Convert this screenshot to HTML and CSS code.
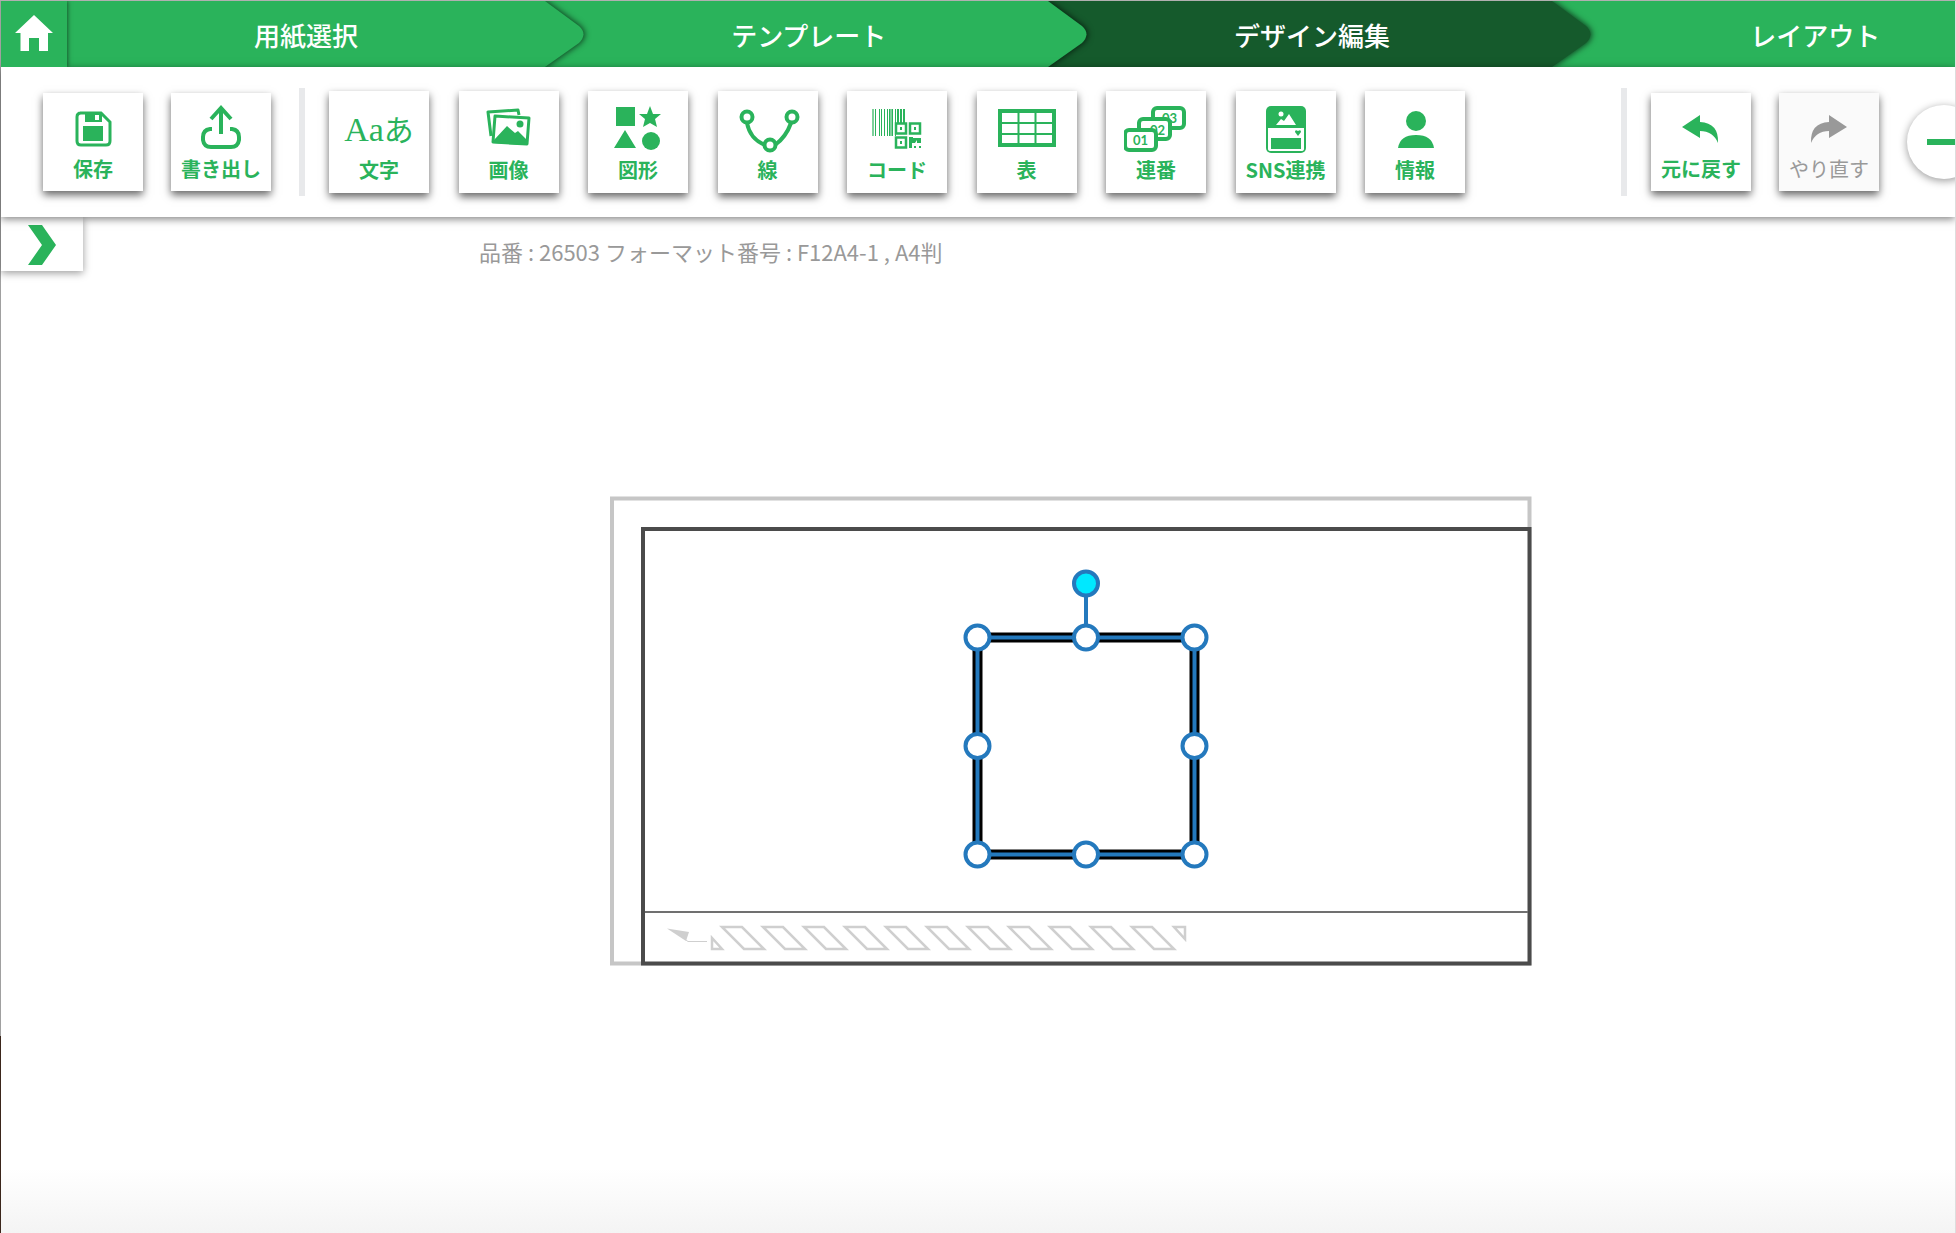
FILE: index.html
```html
<!DOCTYPE html>
<html lang="ja">
<head>
<meta charset="utf-8">
<title>デザイン編集</title>
<link rel="stylesheet" href="styles.css">
</head>
<body>
<div class="app">
  <header class="header">
    <a class="home" href="#" aria-label="ホーム">
      <svg width="38" height="36" viewBox="0 0 38 36"><path fill="#fff" d="M19 0 38 18H33V36H24V23H14V36H5.500V18H0Z"/></svg>
    </a>
    <nav class="steps">
      <a class="step" href="#">用紙選択<svg class="tip" width="56" height="66" viewBox="0 0 56 66"><path d="M-20 0H0L34 25Q43 33 34 42L0 66H-20Z"/></svg></a>
      <a class="step" href="#">テンプレート<svg class="tip" width="56" height="66" viewBox="0 0 56 66"><path d="M-20 0H0L34 25Q43 33 34 42L0 66H-20Z"/></svg></a>
      <a class="step current" href="#" aria-current="step">デザイン編集<svg class="tip" width="56" height="66" viewBox="0 0 56 66"><path d="M-20 0H0L34 25Q43 33 34 42L0 66H-20Z"/></svg></a>
      <a class="step" href="#">レイアウト</a>
    </nav>
  </header>

  <div class="toolbar">
    <div class="file-tools">
      <button class="tool short" type="button">
        <svg width="56" height="52" viewBox="0 0 56 52"><path d="M15 10H36L45 19V38Q45 42 41 42H16Q12 42 12 38V14Q12 10 16 10Z" fill="none" stroke="currentColor" stroke-width="3"/><path fill="currentColor" d="M20 10H37V19H20ZM18 23H38V38H18Z"/><path fill="#fff" d="M30 12H34V17H30Z"/></svg>
        保存
      </button>
      <button class="tool short" type="button">
        <svg width="56" height="52" viewBox="0 0 56 52" fill="none" stroke="currentColor" stroke-width="4"><path d="M28 31V5M18 16 28 5 38 16"/><path d="M19 26H17Q10 27 10 34V37Q11 44 18 44H38Q45 44 46 37V34Q46 27 39 26H37"/></svg>
        書き出し
      </button>
    </div>
    <span class="divider"></span>
    <div class="insert-tools">
      <button class="tool" type="button">
        <span class="type-icon"><span class="latin">Aa</span>あ</span>
        文字
      </button>
      <button class="tool" type="button">
        <svg width="56" height="52" viewBox="0 0 56 52"><path d="M10 33 7 9 37 7 38 12" fill="none" stroke="currentColor" stroke-width="3" stroke-linejoin="round"/><path d="M14 13 48 15 46 41 12 39Z" fill="#fff" stroke="currentColor" stroke-width="3" stroke-linejoin="round"/><path fill="currentColor" d="M13 37 26 23 34 30 37 28 47 38 46 42 12 40Z"/><circle cx="39" cy="21" r="3.500" fill="currentColor"/></svg>
        画像
      </button>
      <button class="tool" type="button">
        <svg width="56" height="52" viewBox="0 0 56 52" fill="currentColor"><path d="M6 4H25V23H6ZM15 27 26 45H4ZM40 3 43 11 51 11 45 16 47 24 40 20 33 24 35 16 29 11H37Z"/><circle cx="41" cy="38" r="9"/></svg>
        図形
      </button>
      <button class="tool" type="button">
        <svg width="64" height="52" viewBox="0 0 64 52" fill="none" stroke="currentColor" stroke-width="4"><circle cx="11" cy="14" r="5.500"/><circle cx="56" cy="14" r="5.500"/><circle cx="34" cy="42" r="5.500"/><path d="M11 20Q14 36 29 42M55 20Q50 34 39 42"/></svg>
        線
      </button>
      <button class="tool" type="button">
        <svg width="56" height="52" viewBox="2 0 56 52"><path stroke="currentColor" stroke-width="1" d="M8.500 6V33M12.500 6V33M14.500 6V33M17.500 6V33M20.500 6V33M22.500 6V33M25.500 6V33M28.500 6V33"/><path stroke="currentColor" stroke-width="2" opacity=".6" d="M6 6V33M24 6V33"/><path stroke="currentColor" stroke-width="2" d="M31 6V22M34 6V20M37 6V20"/><g fill="#fff" stroke="currentColor" stroke-width="2.500"><path d="M29 20.500H39V30.500H29ZM43 20.500H53V30.500H43ZM29 34.500H39V44.500H29Z"/></g><path fill="currentColor" d="M33 24H35V27H33ZM47 24H49V27H47ZM33 38H35V41H33ZM42 34H46V35H54V40H50V37L48 40H45V45H42ZM47 43H49V45H47ZM52 43H54V45H52Z"/></svg>
        コード
      </button>
      <button class="tool" type="button">
        <svg width="58" height="52" viewBox="0 0 58 52" fill="none" stroke="currentColor"><path stroke-width="4" d="M2 8H56V42H2Z"/><path stroke-width="2" d="M2 20H56M2 31H56M20.500 8V42M37.500 8V42"/></svg>
        表
      </button>
      <button class="tool" type="button">
        <svg width="64" height="52" viewBox="1 0 64 52"><rect x="30" y="5" width="31" height="20" rx="4" fill="#fff" stroke="currentColor" stroke-width="4"/><text class="num" x="39" y="20">03</text><rect x="16" y="16" width="31" height="20" rx="4" fill="#fff" stroke="currentColor" stroke-width="4"/><text class="num" x="27" y="32">02</text><rect x="2" y="27" width="31" height="20" rx="4" fill="#fff" stroke="currentColor" stroke-width="4"/><text class="num" x="10" y="42">01</text></svg>
        連番
      </button>
      <button class="tool" type="button">
        <svg width="56" height="52" viewBox="0 0 56 52"><rect x="8" y="3" width="40" height="47" rx="5" fill="currentColor"/><path fill="#fff" d="M10 25H46V46Q46 48 43 48H13Q10 48 10 46Z"/><path fill="currentColor" d="M13 35H43V46H13ZM40 33 37 29Q37 26 40 28Q43 26 43 29Z"/><path fill="#fff" d="M18 22 23 16 26 18 31 11 38 22Z"/><circle cx="23" cy="11" r="2.500" fill="#fff"/></svg>
        SNS連携
      </button>
      <button class="tool" type="button">
        <svg width="56" height="52" viewBox="0 0 56 52" fill="currentColor"><circle cx="29" cy="18" r="10"/><path d="M11 45Q13 32 29 32Q45 32 47 45Z"/></svg>
        情報
      </button>
    </div>
    <div class="history-tools">
      <span class="divider"></span>
      <button class="tool short" type="button">
        <svg width="56" height="52" viewBox="0 0 56 52" fill="currentColor"><path d="M9 24 27 12V19Q46 20 45 40Q40 28 27 28V35Z"/></svg>
        元に戻す
      </button>
      <button class="tool short" type="button" disabled>
        <svg width="56" height="52" viewBox="0 0 56 52" fill="currentColor"><path d="M46 24 28 12V19Q9 20 10 40Q15 28 28 28V35Z"/></svg>
        やり直す
      </button>
      <button class="zoom-out" type="button" aria-label="縮小"><span class="minus"></span></button>
    </div>
  </div>

  <main class="workspace">
    <button class="panel-toggle" type="button" aria-label="パネルを開く">
      <svg width="28" height="40" viewBox="0 0 28 40"><path fill="#2ab35b" d="M0 0H14L28 20 14 40H0L14 20Z"/></svg>
    </button>
    <div class="stage">
      <p class="info">品番 : 26503 フォーマット番号 : F12A4-1 , A4判</p>
      <svg class="canvas" width="922" height="470" viewBox="610 497 922 470">
        <defs>
          <path id="slot" d="M0 0H20L42 22H22Z"/>
        </defs>
        <path fill="none" stroke="#c6c6c6" stroke-width="4" d="M612 499.500H1529.500V964.500H612Z"/>
        <path fill="#fff" stroke="#4b4b4b" stroke-width="4" d="M643 530H1529.500V964.500H643Z"/>
        <path stroke="#707070" stroke-width="2" d="M645 913H1528"/>
        <path fill="#cfcfcf" d="M667 929.500 689 933 686 942Z"/>
        <path stroke="#cfcfcf" fill="none" d="M686 941 688 942.500H707"/>
        <g fill="none" stroke="#cfcfcf" stroke-width="2.500">
          <path d="M712 939V950H722ZM1174 928H1185V940Z"/>
          <use href="#slot" x="722" y="928"/><use href="#slot" x="763" y="928"/><use href="#slot" x="804" y="928"/><use href="#slot" x="845" y="928"/><use href="#slot" x="886" y="928"/><use href="#slot" x="927" y="928"/><use href="#slot" x="968" y="928"/><use href="#slot" x="1009" y="928"/><use href="#slot" x="1050" y="928"/><use href="#slot" x="1091" y="928"/><use href="#slot" x="1132" y="928"/>
        </g>
        <path fill="none" stroke="#000" stroke-width="10" d="M977.500 638.500H1194.500V855.500H977.500Z"/>
        <path fill="none" stroke="#2479bd" stroke-width="4" d="M977.500 638.500H1194.500V855.500H977.500ZM1086 638V584"/>
        <g fill="#fff" stroke="#2479bd" stroke-width="4">
          <circle cx="977.500" cy="638.500" r="12"/><circle cx="1086" cy="638.500" r="12"/><circle cx="1194.500" cy="638.500" r="12"/>
          <circle cx="977.500" cy="747" r="12"/><circle cx="1194.500" cy="747" r="12"/>
          <circle cx="977.500" cy="855.500" r="12"/><circle cx="1086" cy="855.500" r="12"/><circle cx="1194.500" cy="855.500" r="12"/>
          <circle cx="1086" cy="584.500" r="12" fill="#00e8ff"/>
        </g>
      </svg>
    </div>
  </main>
</div>
</body>
</html>
```
FILE: styles.css
```css
* { box-sizing: border-box; }

body {
  margin: 0;
  color: #999;
  background: #fff;
  font-family: "Noto Sans CJK JP", sans-serif;
}

button { padding: 0; border: 0; font: inherit; }

.app {
  display: flex;
  flex-direction: column;
  min-height: 100vh;
  padding-left: 1px;
  overflow: hidden;
  border-top: 1px solid #b0b0b0;
  border-right: 1px solid #ddd;
  background: linear-gradient(#a0a0a0 84%, #3b261b 84%);
}

.header {
  display: flex;
  height: 66px;
  overflow: hidden;
  background: #2ab35b;
}

.home {
  position: relative;
  z-index: 5;
  display: flex;
  flex: none;
  align-items: center;
  justify-content: center;
  width: 66px;
  padding-bottom: 2px;
  background: #2ab35b;
  box-shadow: 1px 0 4px rgba(0, 0, 0, .5);
}

.steps {
  display: grid;
  flex: 1;
  grid-template-columns: 19fr 20fr 20fr 20fr;
  margin-right: -100px;
}

.step {
  position: relative;
  display: flex;
  align-items: center;
  justify-content: center;
  padding: 2px 0 0 24px;
  color: #fff;
  fill: #2ab35b;
  background: #2ab35b;
  font-size: 26px;
  font-weight: 500;
  line-height: 36px;
  text-decoration: none;
}

.step:first-child { padding-left: 0; }

.step.current { background: #155a2c; fill: #155a2c; }

/* The clip keeps the arrow's shadow off its own step. */
.tip {
  position: absolute;
  z-index: 2;
  top: 0;
  left: 100%;
  overflow: visible;
  clip-path: inset(0 0 0 -4px);
  filter: drop-shadow(1px 0 3px rgba(0, 0, 0, .7));
}

.toolbar {
  position: relative;
  z-index: 3;
  display: flex;
  align-items: center;
  height: 150px;
  padding-left: 42px;
  background: #fff;
  box-shadow: 0 2px 8px rgba(0, 0, 0, .5);
}

.file-tools { display: flex; flex: none; gap: 28px; }

.divider {
  flex: none;
  width: 6px;
  height: 108px;
  margin: 0 24px 0 28px;
  background: #e8e9eb;
}

.insert-tools {
  display: flex;
  flex: 0 1 1136px;
  justify-content: space-between;
}

.history-tools {
  display: flex;
  flex: none;
  gap: 28px;
  align-items: center;
  margin-right: -26px;
  margin-left: auto;
}

.history-tools .divider { margin: 0 -4px 0 0; }

.tool {
  display: flex;
  flex: none;
  flex-direction: column;
  align-items: center;
  width: 100px;
  height: 102px;
  padding-top: 12px;
  color: #2ab35b;
  background: #fff;
  box-shadow: 0 4px 8px rgba(0, 0, 0, .6);
  font-size: 20px;
  font-weight: 700;
  line-height: 30px;
  white-space: nowrap;
}

.tool.short { height: 98px; padding-top: 10px; line-height: 28px; }

.tool:disabled { color: #999; background: #fafafa; font-weight: 400; }

.type-icon {
  height: 52px;
  font-size: 30px;
  font-weight: 400;
  line-height: 50px;
}

.latin {
  font-family: "Liberation Serif", serif;
  font-size: 34px;
}

.num {
  fill: currentColor;
  font-family: Lato, sans-serif;
  font-size: 13px;
  font-weight: 700;
}

.zoom-out {
  display: flex;
  align-items: center;
  justify-content: center;
  width: 74px;
  height: 74px;
  border-radius: 50%;
  background: #fff;
  box-shadow: 0 2px 8px rgba(0, 0, 0, .4);
}

.minus { width: 34px; height: 6px; background: #2ab35b; }

.workspace {
  display: flex;
  flex: 1;
  align-items: flex-start;
  background: linear-gradient(to top, #f4f4f4, #fff 64px);
}

.panel-toggle {
  flex: none;
  width: 82px;
  height: 54px;
  padding: 6px 0 0;
  background: #fff;
  box-shadow: 0 2px 8px rgba(0, 0, 0, .4);
}

.stage {
  display: flex;
  flex: 1;
  flex-direction: column;
  align-items: center;
  padding: 18px 0 40px 104px;
}

.info {
  align-self: flex-start;
  margin: 0 0 229px 292px;
  font-size: 22px;
  line-height: 32px;
}

.canvas { display: block; }
```
